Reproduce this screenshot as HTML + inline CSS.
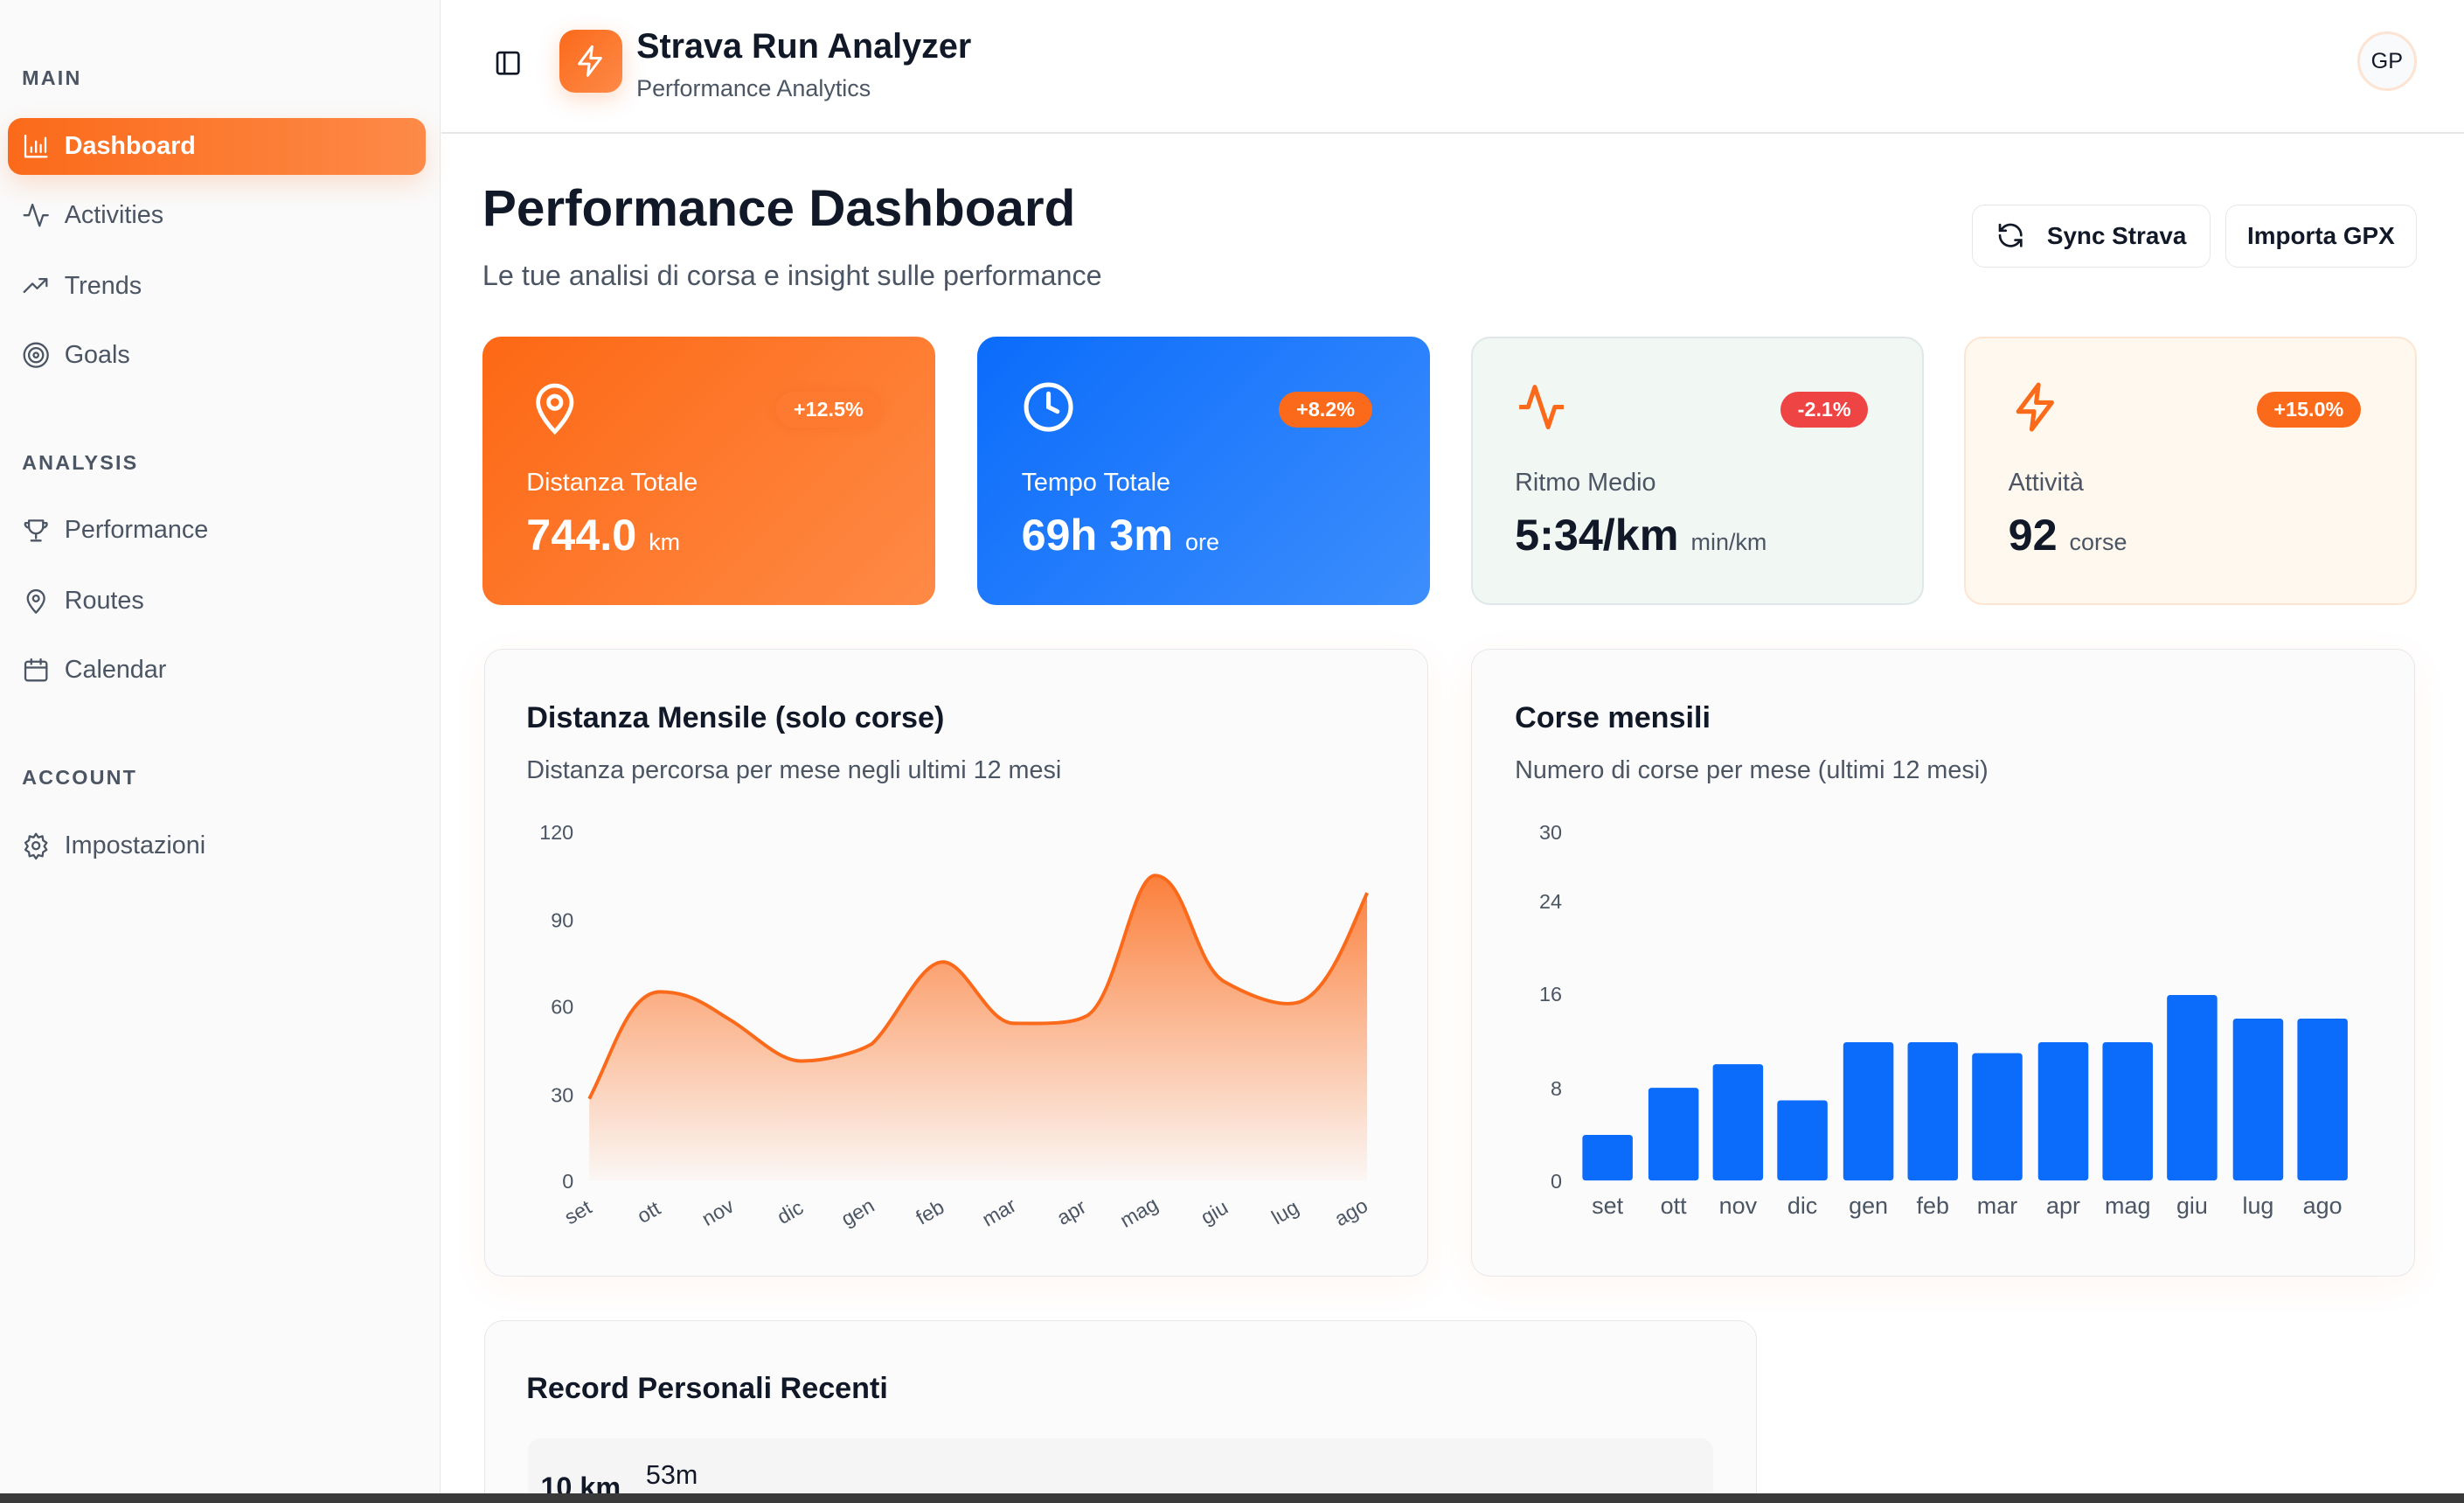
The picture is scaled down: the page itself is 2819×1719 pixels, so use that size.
<!DOCTYPE html>
<html><head><meta charset="utf-8"><style>
html,body{margin:0;padding:0;overflow:hidden;background:#fff}
body{width:1568px;height:956px;zoom:1.7978;position:relative;font-family:"Liberation Sans",sans-serif;color:#111827}
.a{position:absolute}
.side{left:0;top:0;width:280px;height:956px;background:#fafafa;border-right:1px solid #e5e7eb}
.sec{left:14px;font-size:13px;font-weight:bold;letter-spacing:1.2px;color:#4b5563}
.nav{left:14px;font-size:16px;color:#4b5563;display:flex;align-items:center;gap:9px}
.nav svg{width:18px;height:18px;fill:none;stroke:#4b5563;stroke-width:1.7;stroke-linecap:round;stroke-linejoin:round}
.card{border-radius:12px;box-sizing:border-box}
.lbl{font-size:16px}
.val{font-size:28px;font-weight:bold}
.unit{font-size:15px;font-weight:normal}
.badge{font-size:13px;font-weight:bold;color:#fff;border-radius:12px;padding:4px 11px}
.ax{font-size:13px;fill:#4b5563;font-family:"Liberation Sans",sans-serif}
.btn{border:1px solid #e5e7eb;border-radius:8px;background:#fff;font-size:15.5px;font-weight:bold;color:#111827;display:flex;align-items:center;justify-content:center;gap:14px;box-sizing:border-box}
</style></head><body>
<div class="a side"></div>
<div class="a sec" style="top:42px">MAIN</div>
<div class="a" style="left:5px;top:75px;width:266px;height:36px;border-radius:9px;background:linear-gradient(90deg,#fb6a1a,#fd8a48);box-shadow:0 6px 16px rgba(251,110,30,.2)"></div>
<div class="a nav" style="top:84px;color:#fff;font-weight:bold"><svg viewBox="0 0 24 24" style="stroke:#fff"><path d="M3 3v18h18M8 17v-4M12 17V8M16 17v-6M20 17V5"/></svg>Dashboard</div>
<div class="a nav" style="top:128px"><svg viewBox="0 0 24 24"><path d="M2 12h4l3-9 6 18 3-9h4"/></svg>Activities</div>
<div class="a nav" style="top:173px"><svg viewBox="0 0 24 24"><path d="M2 17l7-7 4 4 8-8M15 6h6v6"/></svg>Trends</div>
<div class="a nav" style="top:217px"><svg viewBox="0 0 24 24"><circle cx="12" cy="12" r="10"/><circle cx="12" cy="12" r="6"/><circle cx="12" cy="12" r="2"/></svg>Goals</div>
<div class="a sec" style="top:287px">ANALYSIS</div>
<div class="a nav" style="top:328px"><svg viewBox="0 0 24 24"><path d="M6 4h12v5a6 6 0 0 1-12 0zM6 6H3a3 3 0 0 0 3 4M18 6h3a3 3 0 0 1-3 4M12 15v4M8 21h8"/></svg>Performance</div>
<div class="a nav" style="top:373px"><svg viewBox="0 0 24 24"><path d="M12 22s7-7 7-12a7 7 0 0 0-14 0c0 5 7 12 7 12z"/><circle cx="12" cy="10" r="2.5"/></svg>Routes</div>
<div class="a nav" style="top:417px"><svg viewBox="0 0 24 24"><rect x="3" y="5" width="18" height="16" rx="2"/><path d="M3 10h18M8 3v4M16 3v4"/></svg>Calendar</div>
<div class="a sec" style="top:487px">ACCOUNT</div>
<div class="a nav" style="top:529px"><svg viewBox="0 0 24 24"><circle cx="12" cy="12" r="3"/><path d="M12 2l2 3 3.5-1 .5 3.5 3 2-2 3 2 3-3 2-.5 3.5-3.5-1-2 3-2-3-3.5 1-.5-3.5-3-2 2-3-2-3 3-2L6.5 4 10 5z"/></svg>Impostazioni</div>

<div class="a" style="left:281px;top:84px;width:1287px;height:1px;background:#e5e7eb"></div>
<svg class="a" style="left:314px;top:31px" width="18" height="18" viewBox="0 0 24 24" fill="none" stroke="#111827" stroke-width="2"><rect x="3" y="3" width="18" height="18" rx="2"/><path d="M9 3v18"/></svg>
<div class="a" style="left:356px;top:19px;width:40px;height:40px;border-radius:10px;background:linear-gradient(135deg,#fb6a1a,#fd8a48);box-shadow:0 4px 14px rgba(251,110,30,.25)"></div>
<svg class="a" style="left:365px;top:28px" width="22" height="22" viewBox="0 0 24 24" fill="none" stroke="#fff" stroke-width="1.8" stroke-linejoin="round"><path d="M13 2L4 14h7l-1 8 9-12h-7z"/></svg>
<div class="a" style="left:405px;top:17px;font-size:22px;font-weight:bold">Strava Run Analyzer</div>
<div class="a" style="left:405px;top:48px;font-size:15px;color:#4b5563">Performance Analytics</div>
<div class="a" style="left:1500px;top:20px;width:38px;height:38px;border-radius:50%;background:#f9fafb;border:2px solid #fde3d2;box-sizing:border-box;font-size:14px;display:flex;align-items:center;justify-content:center">GP</div>

<div class="a" style="left:307px;top:114px;font-size:32.5px;font-weight:bold">Performance Dashboard</div>
<div class="a" style="left:307px;top:165px;font-size:18px;color:#4b5563">Le tue analisi di corsa e insight sulle performance</div>
<div class="a btn" style="left:1255px;top:130px;width:152px;height:40px"><svg width="18" height="18" viewBox="0 0 24 24" fill="none" stroke="#111827" stroke-width="2" stroke-linecap="round"><path d="M21 12a9 9 0 0 0-15.5-6.3L3 8M3 3v5h5M3 12a9 9 0 0 0 15.5 6.3L21 16M21 21v-5h-5"/></svg>Sync Strava</div>
<div class="a btn" style="left:1416px;top:130px;width:122px;height:40px">Importa GPX</div>

<div class="a card" style="left:307px;top:214px;width:288px;height:171px;background:linear-gradient(135deg,#fd6814,#fe8a46)"></div>
<div class="a card" style="left:622px;top:214px;width:288px;height:171px;background:linear-gradient(135deg,#0b6cfb,#3d8efc)"></div>
<div class="a card" style="left:936px;top:214px;width:288px;height:171px;background:#f1f7f3;border:1.5px solid #dfe7ea"></div>
<div class="a card" style="left:1250px;top:214px;width:288px;height:171px;background:#fff8ef;border:1.5px solid #fde5d2"></div>
<svg class="a" style="left:337px;top:242px" width="32" height="36" viewBox="0 0 24 26" fill="none" stroke="#fff" stroke-width="2"><path d="M12 24s8-8 8-14a8 8 0 0 0-16 0c0 6 8 14 8 14z"/><circle cx="12" cy="10" r="3"/></svg>
<svg class="a" style="left:650px;top:242px" width="34" height="34" viewBox="0 0 24 24" fill="none" stroke="#fff" stroke-width="2" stroke-linecap="round"><circle cx="12" cy="12" r="10"/><path d="M12 6v6l4 2"/></svg>
<svg class="a" style="left:964px;top:242px" width="34" height="34" viewBox="0 0 24 24" fill="none" stroke="#fb6a1a" stroke-width="2" stroke-linejoin="round"><path d="M2 12h4l3-9 6 18 3-9h4"/></svg>
<svg class="a" style="left:1279px;top:242px" width="34" height="34" viewBox="0 0 24 24" fill="none" stroke="#fb6a1a" stroke-width="2" stroke-linejoin="round"><path d="M13 2L4 14h7l-1 8 9-12h-7z"/></svg>
<div class="a badge" style="left:494px;top:249px;background:#fd7a30;box-shadow:0 0 6px rgba(230,90,20,.25)">+12.5%</div>
<div class="a badge" style="left:814px;top:249px;background:#fb6a1a">+8.2%</div>
<div class="a badge" style="left:1133px;top:249px;background:#ef4444">-2.1%</div>
<div class="a badge" style="left:1436px;top:249px;background:#fb6a1a">+15.0%</div>
<div class="a lbl" style="left:335px;top:298px;color:#fff">Distanza Totale</div>
<div class="a lbl" style="left:650px;top:298px;color:#fff">Tempo Totale</div>
<div class="a lbl" style="left:964px;top:298px;color:#4b5563">Ritmo Medio</div>
<div class="a lbl" style="left:1278px;top:298px;color:#4b5563">Attività</div>
<div class="a val" style="left:335px;top:324px;color:#fff">744.0 <span class="unit">km</span></div>
<div class="a val" style="left:650px;top:324px;color:#fff">69h 3m <span class="unit">ore</span></div>
<div class="a val" style="left:964px;top:324px">5:34/km <span class="unit" style="color:#4b5563">min/km</span></div>
<div class="a val" style="left:1278px;top:324px">92 <span class="unit" style="color:#4b5563">corse</span></div>

<div class="a card" style="left:308px;top:413px;width:601px;height:399px;border:1px solid #e5e7eb;background:#fbfbfb;box-shadow:0 6px 24px rgba(251,110,30,.06)"></div>
<div class="a card" style="left:936px;top:413px;width:601px;height:399px;border:1px solid #e5e7eb;background:#fbfbfb;box-shadow:0 6px 24px rgba(251,110,30,.06)"></div>
<div class="a" style="left:335px;top:446px;font-size:19px;font-weight:bold">Distanza Mensile (solo corse)</div>
<div class="a" style="left:335px;top:481px;font-size:16px;color:#4b5563">Distanza percorsa per mese negli ultimi 12 mesi</div>
<div class="a" style="left:964px;top:446px;font-size:19px;font-weight:bold">Corse mensili</div>
<div class="a" style="left:964px;top:481px;font-size:16px;color:#4b5563">Numero di corse per mese (ultimi 12 mesi)</div>

<svg class="a" style="left:0;top:0" width="1568" height="956">
<defs><linearGradient id="g" x1="0" y1="0" x2="0" y2="1"><stop offset="0" stop-color="#fb6a1a" stop-opacity=".85"/><stop offset="1" stop-color="#fb6a1a" stop-opacity=".03"/></linearGradient></defs>
<g class="ax" text-anchor="end"><text x="365" y="534">120</text><text x="365" y="590">90</text><text x="365" y="645">60</text><text x="365" y="701">30</text><text x="365" y="756">0</text></g>
<path d="M375 699 C390 670,400 631,420 631 C440 631,450 640,465 649 C480 658,495 675,510 675 C525 675,545 670,555 664 C570 650,585 612,600 612 C615 612,628 651,645 651 C660 651,680 652,690 647 C710 640,720 557,735 557 C755 557,760 615,780 625 C800 636,815 640,825 638 C845 634,860 590,870 568 L870 751 L375 751 Z" fill="url(#g)"/>
<path d="M375 699 C390 670,400 631,420 631 C440 631,450 640,465 649 C480 658,495 675,510 675 C525 675,545 670,555 664 C570 650,585 612,600 612 C615 612,628 651,645 651 C660 651,680 652,690 647 C710 640,720 557,735 557 C755 557,760 615,780 625 C800 636,815 640,825 638 C845 634,860 590,870 568" fill="none" stroke="#fb6a1a" stroke-width="2.2"/>
<g class="ax" text-anchor="middle">
<text transform="translate(370,775) rotate(-30)">set</text><text transform="translate(415,775) rotate(-30)">ott</text><text transform="translate(459,775) rotate(-30)">nov</text><text transform="translate(505,775) rotate(-30)">dic</text><text transform="translate(548,775) rotate(-30)">gen</text><text transform="translate(594,775) rotate(-30)">feb</text><text transform="translate(638,775) rotate(-30)">mar</text><text transform="translate(684,775) rotate(-30)">apr</text><text transform="translate(727,775) rotate(-30)">mag</text><text transform="translate(775,775) rotate(-30)">giu</text><text transform="translate(820,775) rotate(-30)">lug</text><text transform="translate(862,775) rotate(-30)">ago</text></g>
<g class="ax" text-anchor="end"><text x="994" y="534">30</text><text x="994" y="578">24</text><text x="994" y="637">16</text><text x="994" y="697">8</text><text x="994" y="756">0</text></g>
<g fill="#0b6cfb">
<rect x="1007" y="722" width="32" height="29" rx="2"/><rect x="1049" y="692" width="32" height="59" rx="2"/><rect x="1090" y="677" width="32" height="74" rx="2"/><rect x="1131" y="700" width="32" height="51" rx="2"/><rect x="1173" y="663" width="32" height="88" rx="2"/><rect x="1214" y="663" width="32" height="88" rx="2"/><rect x="1255" y="670" width="32" height="81" rx="2"/><rect x="1297" y="663" width="32" height="88" rx="2"/><rect x="1338" y="663" width="32" height="88" rx="2"/><rect x="1379" y="633" width="32" height="118" rx="2"/><rect x="1421" y="648" width="32" height="103" rx="2"/><rect x="1462" y="648" width="32" height="103" rx="2"/></g>
<g class="ax" text-anchor="middle" style="font-size:15px"><text x="1023" y="772">set</text><text x="1065" y="772">ott</text><text x="1106" y="772">nov</text><text x="1147" y="772">dic</text><text x="1189" y="772">gen</text><text x="1230" y="772">feb</text><text x="1271" y="772">mar</text><text x="1313" y="772">apr</text><text x="1354" y="772">mag</text><text x="1395" y="772">giu</text><text x="1437" y="772">lug</text><text x="1478" y="772">ago</text></g>
</svg>

<div class="a card" style="left:308px;top:840px;width:810px;height:140px;border:1px solid #e5e7eb;background:#fbfbfb"></div>
<div class="a" style="left:335px;top:873px;font-size:19px;font-weight:bold">Record Personali Recenti</div>
<div class="a" style="left:336px;top:915px;width:754px;height:40px;background:#f5f5f5;border-radius:8px"></div>
<div class="a" style="left:344px;top:936px;font-size:18px;font-weight:bold">10 km</div>
<div class="a" style="left:411px;top:929px;font-size:17px">53m</div>
<div class="a" style="left:0;top:950px;width:1568px;height:6px;background:#3a3a3a"></div>
</body></html>
